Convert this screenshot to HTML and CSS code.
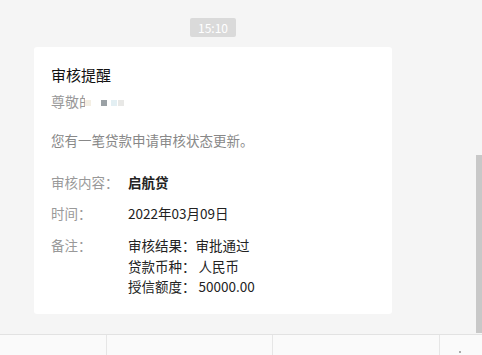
FILE: index.html
```html
<!DOCTYPE html>
<html lang="zh-CN">
<head>
    <meta charset="UTF-8">
    <meta name="viewport" content="width=device-width, initial-scale=1.0">
    <title>审核提醒</title>
    <link rel="stylesheet" href="styles.css">
</head>
<body>
    <div class="chat">
        <div class="chat-main">
            <div class="column">
                <div class="time"><span>15:10</span></div>

                <div class="card">
                    <div class="card-title">审核提醒</div>
                    <div class="greeting">
                        尊敬<span class="cut">的</span><span class="mask m1"></span><span class="mask m2"></span><span class="mask m3"></span><span class="mask m4"></span>
                    </div>
                    <div class="desc">您有一笔贷款申请审核状态更新。</div>

                    <div class="row first">
                        <span class="label">审核内容：</span>
                        <span class="value strong">启航贷</span>
                    </div>
                    <div class="row">
                        <span class="label">时间：</span>
                        <span class="value">2022年03月09日</span>
                    </div>
                    <div class="row notes">
                        <span class="label">备注：</span>
                        <span class="value">
                            审核结果：审批通过<br>
                            贷款币种： 人民币<br>
                            授信额度： 50000.00
                        </span>
                    </div>
                </div>
            </div>
        </div>
        <div class="scroll-track">
            <div class="scroll-thumb"></div>
        </div>
    </div>

    <div class="menu">
        <div class="menu-item m-a">微店</div>
        <div class="menu-item m-b">服务中心</div>
        <div class="menu-item m-c">更多服务</div>
        <div class="menu-item m-d">
            <svg width="14" height="14" viewBox="0 0 14 14"><path d="M7 1 L7 3 M2 11 Q7 3 12 11" fill="none" stroke="#777" stroke-width="1.2"/></svg>
        </div>
    </div>
</body>
</html>
```

FILE: styles.css
```css
body
{
    margin: 0;
    background-color: #f5f5f5;
    font-family: "Noto Sans CJK SC", "Microsoft YaHei", sans-serif;
    height: 355px;
    overflow: hidden;
}

.chat
{
    display: flex;
    height: 334px;
}

.chat-main
{
    flex: 1;
}

.column
{
    width: 358px;
    margin-left: 34px;
}

.time
{
    display: flex;
    justify-content: center;
    padding-top: 18px;
}

.time span
{
    width: 46px;
    height: 19px;
    line-height: 19px;
    text-align: center;
    background-color: #dadada;
    color: #fff;
    font-size: 12px;
    border-radius: 2px;
}

.card
{
    margin-top: 10px;
    background-color: #fff;
    border-radius: 3px;
    padding: 18px 17px 17px;
    color: #333;
}

.card-title
{
    font-size: 15px;
    line-height: 20px;
    color: #111;
}

.greeting
{
    margin-top: 6px;
    font-size: 14px;
    line-height: 20px;
    color: #999;
    display: flex;
    align-items: center;
}

.cut
{
    display: inline-block;
    width: 6px;
    overflow: hidden;
    white-space: nowrap;
}

.mask
{
    display: inline-block;
    width: 6px;
    height: 6px;
    margin-top: 4px;
}

.m1
{
    background-color: #f4efe4;
    margin-left: 0;
}

.m2
{
    background-color: #9aa1a5;
    margin-left: 10px;
}

.m3
{
    background-color: #e3eff3;
    margin-left: 4px;
}

.m4
{
    background-color: #e8e8e6;
    margin-left: 1px;
}

.desc
{
    margin-top: 19px;
    font-size: 13.5px;
    line-height: 20px;
    color: #888;
}

.row
{
    display: flex;
    margin-top: 11px;
    font-size: 13.5px;
    line-height: 20px;
}

.row.first
{
    margin-top: 22px;
}

.row.notes
{
    margin-top: 12px;
    line-height: 20.5px;
}

.label
{
    width: 77px;
    flex-shrink: 0;
    color: #999;
}

.value
{
    color: #222;
}

.strong
{
    font-weight: bold;
}

.scroll-track
{
    width: 6px;
    padding-top: 155px;
}

.scroll-thumb
{
    height: 178px;
    background-color: #c8c8c8;
}

.menu
{
    display: flex;
    height: 20px;
    border-top: 1px solid #e2e2e2;
    background-color: #fafafa;
}

.menu-item
{
    padding-top: 17px;
    font-size: 13px;
    color: #555;
    border-right: 1px solid #e6e6e6;
    box-sizing: border-box;
}

.m-a
{
    width: 107px;
    padding-left: 13px;
}

.m-b
{
    width: 166px;
    padding-left: 73px;
}

.m-c
{
    width: 167px;
    padding-left: 70px;
}

.m-d
{
    flex: 1;
    border-right: none;
    padding-top: 14px;
    padding-left: 13px;
}
```
